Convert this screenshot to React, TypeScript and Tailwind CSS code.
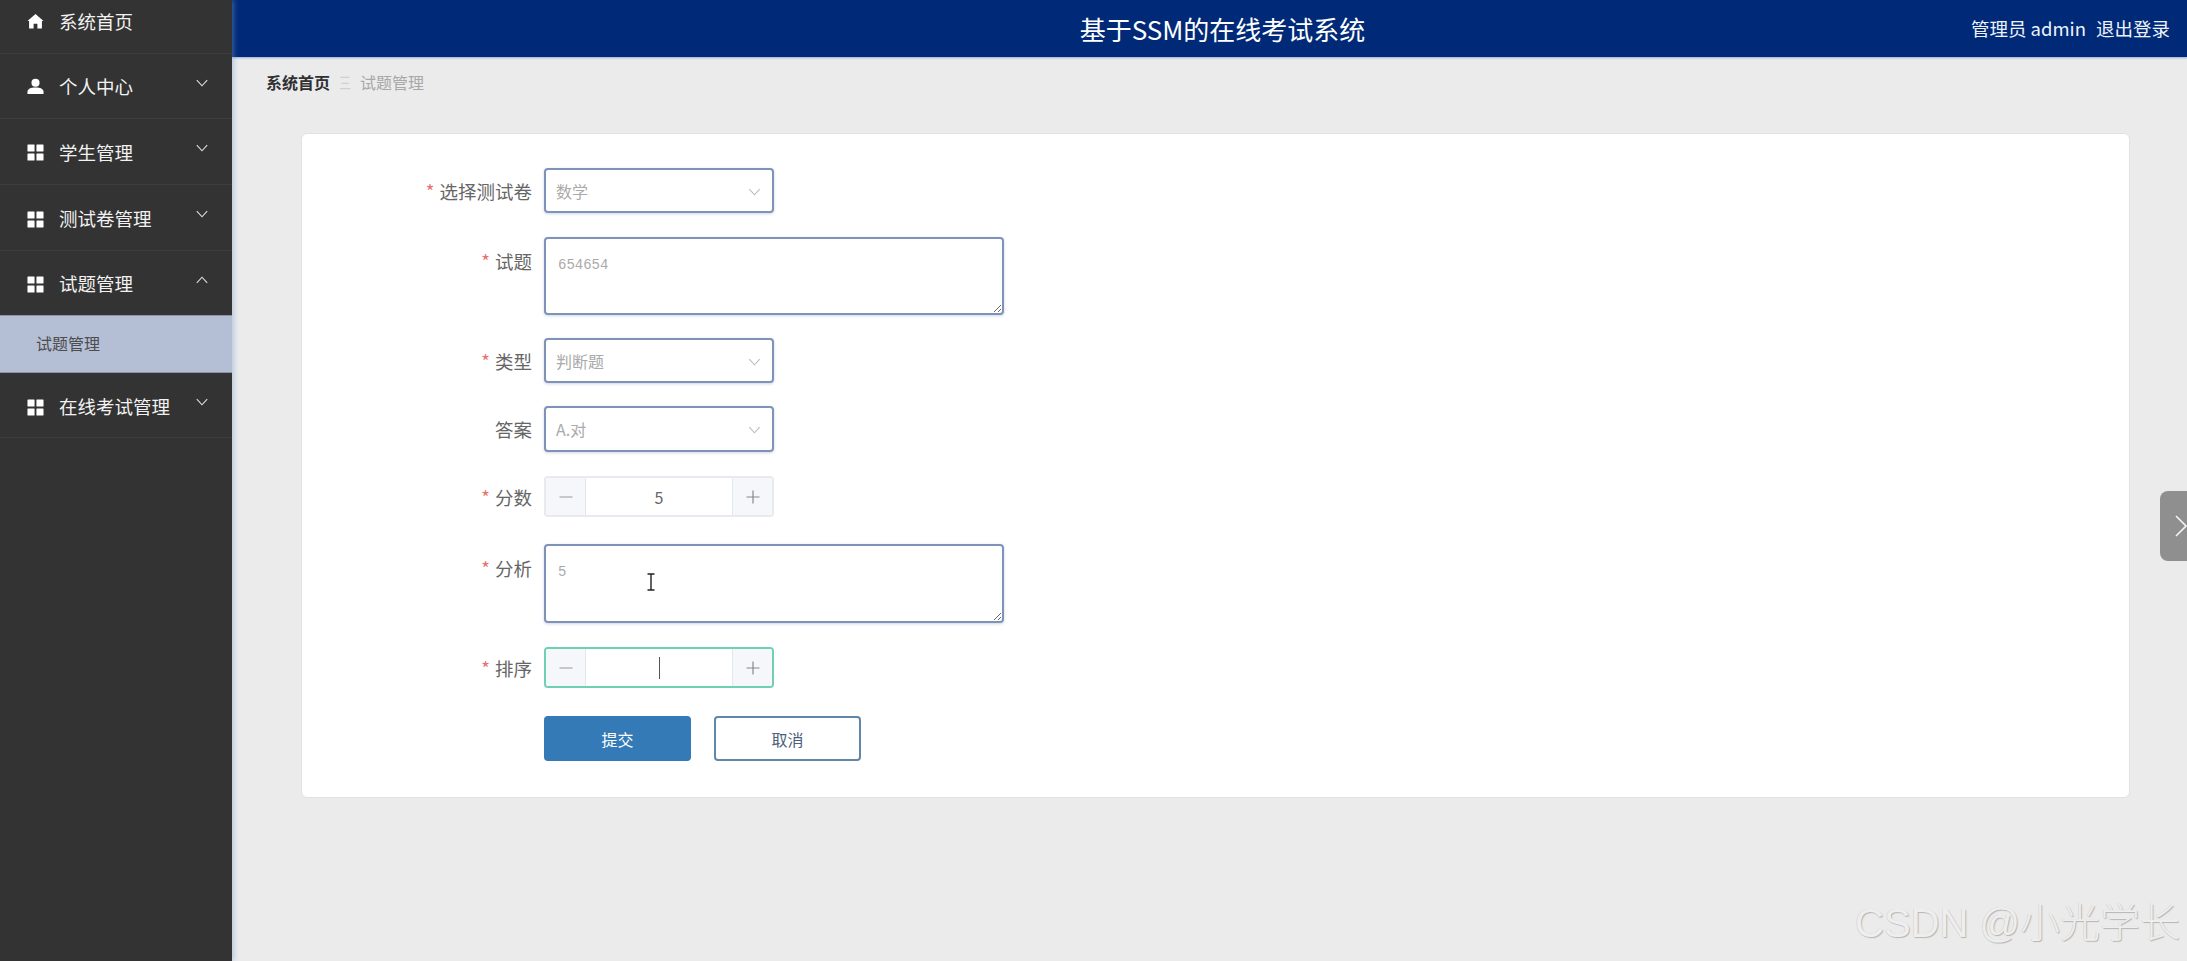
const FONT = "font-['Microsoft_YaHei','Noto_Sans_CJK_SC','Liberation_Sans',sans-serif]";

function HomeIcon() {
  return (
    <svg viewBox="0 0 18 18" className="h-[17px] w-[17px]" fill="white">
      <path d="M9 1 L17.5 8.6 L15.8 8.6 L15.8 16.5 L11 16.5 L11 11.5 L7 11.5 L7 16.5 L2.2 16.5 L2.2 8.6 L0.5 8.6 Z" />
    </svg>
  );
}

function UserIcon() {
  return (
    <svg viewBox="0 0 18 18" className="h-[17px] w-[17px]" fill="white">
      <circle cx="9" cy="5" r="4.3" />
      <path d="M0.5 17 L0.5 14.5 C0.5 11.5 4 10 9 10 C14 10 17.5 11.5 17.5 14.5 L17.5 17 Z" />
    </svg>
  );
}

function GridIcon() {
  return (
    <svg viewBox="0 0 18 18" className="h-[17px] w-[17px]" fill="white">
      <rect x="0.5" y="0.5" width="7.5" height="7.5" rx="0.6" />
      <rect x="10" y="0.5" width="7.5" height="7.5" rx="0.6" />
      <rect x="0.5" y="10" width="7.5" height="7.5" rx="0.6" />
      <rect x="10" y="10" width="7.5" height="7.5" rx="0.6" />
    </svg>
  );
}

function Chevron({ up = false, className = "" }: { up?: boolean; className?: string }) {
  return (
    <svg viewBox="0 0 12 8" fill="none" stroke="currentColor" strokeWidth="1.1" className={className}>
      <polyline points={up ? "0.8,6.8 6,1.2 11.2,6.8" : "0.8,1.2 6,6.8 11.2,1.2"} />
    </svg>
  );
}

function MenuItem({
  label,
  icon,
  arrow,
  className = "",
}: {
  label: string;
  icon: React.ReactNode;
  arrow?: "up" | "down";
  className?: string;
}) {
  return (
    <div className={`relative flex items-center border-b border-[#3d3d3d] pl-[27px] text-[18.5px] text-white ${className}`}>
      <span className="mr-[15px] flex w-[17px] items-center">{icon}</span>
      <span className="text-[#f2f2f2]">{label}</span>
      {arrow && (
        <Chevron
          up={arrow === "up"}
          className="absolute right-[24px] top-[25px] h-[8px] w-[12px] text-[#e0e0e0]"
        />
      )}
    </div>
  );
}

function Label({ text, required = true, top = false }: { text: string; required?: boolean; top?: boolean }) {
  return (
    <div className={`w-[242px] shrink-0 pr-[12px] text-right text-[18.5px] leading-[26px] text-[#666] ${top ? "pt-[11px]" : ""}`}>
      {required && <span className="mr-[5px] text-[#e8706f]">*</span>}
      {text}
    </div>
  );
}

function SelectBox({ value }: { value: string }) {
  return (
    <div className="relative flex h-full w-[230px] items-center rounded-[4px] border-2 border-[#7f92b8] bg-white pl-[10px] text-[16px] text-[#aaa] shadow-[0_1px_3px_rgba(112,136,180,0.35)]">
      {value}
      <Chevron className="absolute right-[11px] top-[18px] h-[8px] w-[13px] text-[#b8bcc4]" />
    </div>
  );
}

function Area({ value }: { value: string }) {
  return (
    <textarea
      readOnly
      defaultValue={value}
      className="h-full w-[460px] rounded-[4px] border-2 border-[#7f92b8] bg-white px-[12px] py-[16px] font-['Liberation_Mono',monospace] text-[14px] leading-[20px] text-[#aaa] shadow-[0_1px_3px_rgba(112,136,180,0.35)] outline-none"
    />
  );
}

function Stepper({ value, focused = false }: { value?: string; focused?: boolean }) {
  return (
    <div
      className={`flex h-full w-[230px] overflow-hidden rounded-[4px] border-2 bg-white text-[#777] ${
        focused ? "border-[#6fd0b4]" : "border-[#e8eaef]"
      }`}
    >
      <div className="flex w-[40px] items-center justify-center border-r border-[#e4e7ed] bg-[#f5f7fa] text-[#999]">
        <svg viewBox="0 0 14 14" className="h-[14px] w-[14px]" stroke="currentColor" strokeWidth="1.2">
          <line x1="0.5" y1="7" x2="13.5" y2="7" />
        </svg>
      </div>
      <div className="flex flex-1 items-center justify-center text-[16px] text-[#666]">
        {value}
        {focused && <span className="h-[22px] w-px bg-[#555]" />}
      </div>
      <div className="flex w-[40px] items-center justify-center border-l border-[#e4e7ed] bg-[#f5f7fa] text-[#888]">
        <svg viewBox="0 0 14 14" className="h-[14px] w-[14px]" stroke="currentColor" strokeWidth="1.2">
          <line x1="0.5" y1="7" x2="13.5" y2="7" />
          <line x1="7" y1="0.5" x2="7" y2="13.5" />
        </svg>
      </div>
    </div>
  );
}

export default function App() {
  return (
    <div className={`relative flex h-[961px] w-[2187px] overflow-hidden bg-[#ebebeb] ${FONT}`}>
      {/* 侧边栏 */}
      <aside className="z-10 w-[232px] shrink-0 overflow-hidden bg-[#333333] shadow-[2px_0_5px_rgba(120,160,210,0.45)]">
        <MenuItem label="系统首页" icon={<HomeIcon />} className="h-[54px] pb-[10px]" />
        <MenuItem label="个人中心" icon={<UserIcon />} arrow="down" className="h-[65px] pt-[1px]" />
        <MenuItem label="学生管理" icon={<GridIcon />} arrow="down" className="h-[66px] pt-[2px]" />
        <MenuItem label="测试卷管理" icon={<GridIcon />} arrow="down" className="h-[66px] pt-[3px]" />
        <MenuItem label="试题管理" icon={<GridIcon />} arrow="up" className="h-[64px] border-b-0 pt-[2px]" />
        <div className="flex h-[58px] items-center border-y border-[#8d93a3] bg-[#b4bfd6] pl-[36px] pb-[2px] text-[16px] text-[#4d4d4d]">
          试题管理
        </div>
        <MenuItem label="在线考试管理" icon={<GridIcon />} arrow="down" className="h-[65px] pt-[4px]" />
      </aside>

      <div className="flex min-w-0 flex-1 flex-col">
        <header className="grid h-[57px] shrink-0 grid-cols-[1fr_auto_1fr] items-center bg-[#002a78] pl-[43px] pr-[17px] text-white shadow-[0_1px_2px_rgba(120,160,210,0.8)]">
          <div />
          <div className="text-[26px]">基于SSM的在线考试系统</div>
          <div className="flex justify-end gap-[10px] text-[18.5px] text-[#eef3fb]">
            <span>管理员 admin</span>
            <span>退出登录</span>
          </div>
        </header>

        <nav className="flex items-center pl-[34px] pt-[14px] text-[16px] leading-[22px]">
          <span className="font-bold text-[#303133]">系统首页</span>
          <span className="mx-[7px] scale-x-75 text-[#d0d0d0]">三</span>
          <span className="text-[#a8a8a8]">试题管理</span>
        </nav>

        <main className="ml-[69px] mr-[57px] mt-[40px] h-[665px] rounded-[6px] border border-[#e2e2e2] bg-white pt-[34px]">
          <div className="flex h-[45px] items-center">
            <Label text="选择测试卷" />
            <SelectBox value="数学" />
          </div>
          <div className="mt-[24px] flex h-[78px]">
            <Label text="试题" top />
            <Area value="654654" />
          </div>
          <div className="mt-[23px] flex h-[45px] items-center">
            <Label text="类型" />
            <SelectBox value="判断题" />
          </div>
          <div className="mt-[23px] flex h-[46px] items-center">
            <Label text="答案" required={false} />
            <SelectBox value="A.对" />
          </div>
          <div className="mt-[24px] flex h-[41px] items-center">
            <Label text="分数" />
            <Stepper value="5" />
          </div>
          <div className="mt-[27px] flex h-[79px]">
            <Label text="分析" top />
            <Area value="5" />
          </div>
          <div className="mt-[24px] flex h-[41px] items-center">
            <Label text="排序" />
            <Stepper focused />
          </div>
          <div className="mt-[28px] flex h-[45px] pl-[242px] text-[16px]">
            <button className="w-[147px] rounded-[4px] bg-[#337ab7] text-white">提交</button>
            <button className="ml-[23px] w-[147px] rounded-[4px] border-2 border-[#6286a8] bg-white text-[#4c5f7d]">
              取消
            </button>
          </div>
        </main>
      </div>

      {/* 鼠标 I 形光标 */}
      <svg viewBox="0 0 10 18" className="absolute left-[646px] top-[572px] h-[20px] w-[10px]" fill="none" stroke="#222" strokeWidth="1.4">
        <path d="M1.5 1 H8.5 M5 1 V17 M1.5 17 H8.5" />
      </svg>

      {/* 右侧折叠按钮 */}
      <div className="absolute right-0 top-[491px] h-[70px] w-[27px] overflow-hidden rounded-l-[8px] bg-[#8f8f8f]">
        <svg viewBox="0 0 14 22" className="absolute left-[15px] top-[24px] h-[22px] w-[14px]" fill="none" stroke="#f4f4f4" strokeWidth="1.6">
          <polyline points="1,1 11,11 1,21" />
        </svg>
      </div>

      {/* 水印 */}
      <div className="absolute left-[1855px] top-[895px] whitespace-nowrap text-[40px] leading-[50px] font-light text-[#eeeeee] [text-shadow:1px_1px_1px_#b5b5b5,-0.5px_-0.5px_0_#d0d0d0]">
        <span className="font-['Liberation_Sans',sans-serif]">CSDN @</span>小光学长
      </div>
    </div>
  );
}
